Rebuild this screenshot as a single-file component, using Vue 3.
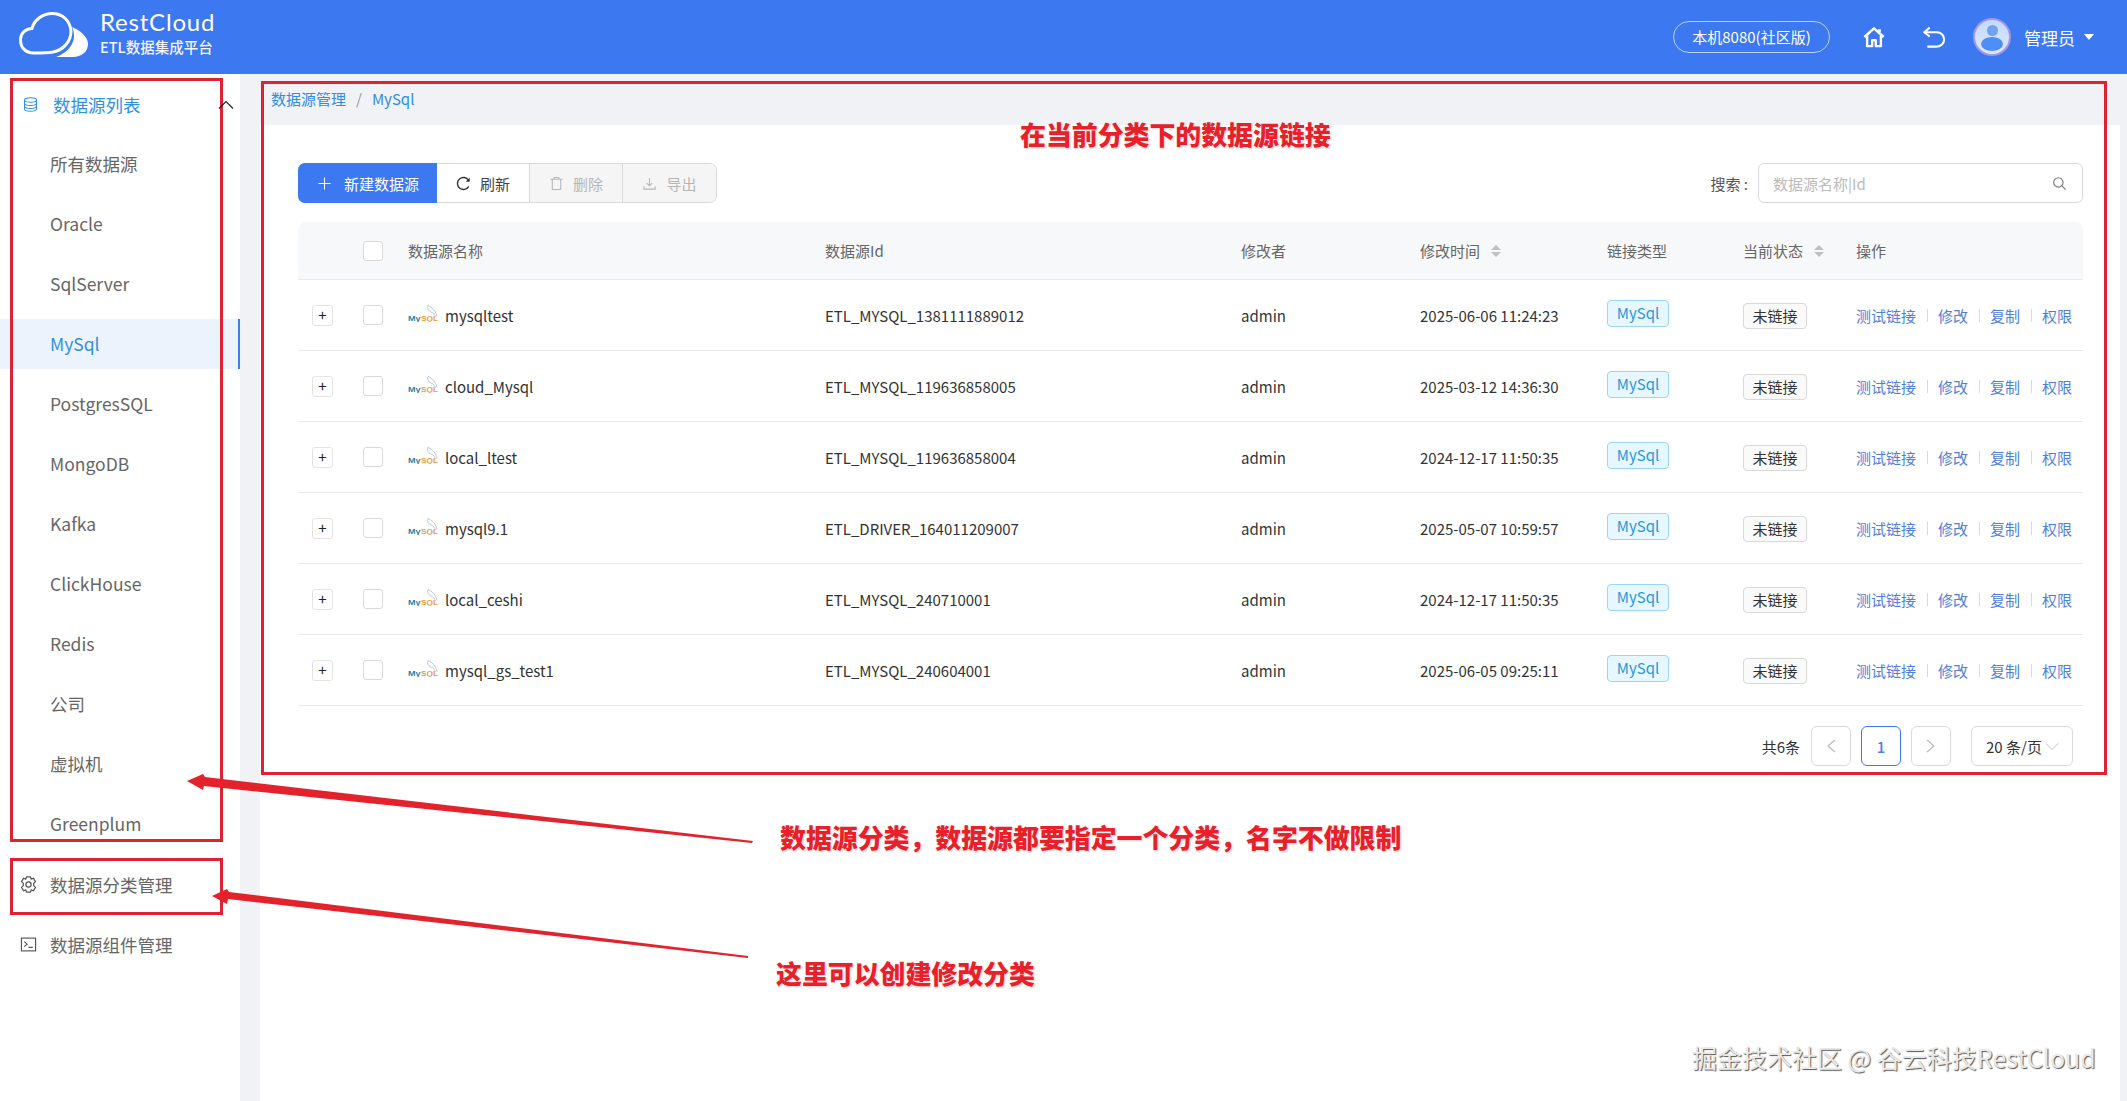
<script setup>
const menu = ['所有数据源','Oracle','SqlServer','MySql','PostgresSQL','MongoDB','Kafka','ClickHouse','Redis','公司','虚拟机','Greenplum']
const rows = [
  ['mysqltest','ETL_MYSQL_1381111889012','2025-06-06 11:24:23'],
  ['cloud_Mysql','ETL_MYSQL_119636858005','2025-03-12 14:36:30'],
  ['local_ltest','ETL_MYSQL_119636858004','2024-12-17 11:50:35'],
  ['mysql9.1','ETL_DRIVER_164011209007','2025-05-07 10:59:57'],
  ['local_ceshi','ETL_MYSQL_240710001','2024-12-17 11:50:35'],
  ['mysql_gs_test1','ETL_MYSQL_240604001','2025-06-05 09:25:11'],
]
</script>

<template>
  <div class="page">
    <header class="topbar">
      <div class="brand">
        <svg class="cloud" viewBox="0 0 70 46" fill="none">
          <path d="M53 15C60 18 69 24 69 32C69 40 62 45 54 45L37 45C46 42 55 34 55 24C55 20 54 17 53 15Z" fill="#fff"/>
          <path d="M15 41C6 41 1.5 35 1.5 28C1.5 21 7 16.5 13 16.5C15 8 24 1.5 33 1.5C44 1.5 51 9 52 19C52 30 44 38 34 40C28 41 20 41 15 41Z" stroke="#fff" stroke-width="3"/>
        </svg>
        <div class="brand-text">
          <div class="brand-name">RestCloud</div>
          <div class="brand-sub">ETL数据集成平台</div>
        </div>
      </div>
      <div class="top-right">
        <div class="env">本机8080(社区版)</div>
        <svg class="home" viewBox="0 0 24 24" fill="none" stroke="#fff" stroke-width="2.6" stroke-linejoin="round">
          <path d="M1.5 12L12 2.5L22.5 12"/>
          <path d="M4.5 10.5V22H10V15.5H14V22H19.5V10.5"/>
          <path d="M18 3.5V7" stroke-width="3"/>
        </svg>
        <svg class="back" viewBox="0 0 24 24" fill="none" stroke="#fff" stroke-width="2.2">
          <path d="M2 6.5H15A7.5 7.5 0 0 1 15 21.5H5"/>
          <path d="M7.5 1.5L2 6.5L7.5 11"/>
        </svg>
        <div class="avatar"><i class="head"></i><i class="torso"></i></div>
        <span class="user">管理员</span>
        <i class="caret"></i>
      </div>
    </header>

    <div class="body">
      <aside class="side">
        <div class="side-head">
          <svg class="db" viewBox="0 0 16 16" fill="none" stroke="currentColor" stroke-width="1.1">
            <ellipse cx="8" cy="3.2" rx="6.4" ry="2.4"/>
            <path d="M1.6 3.2V12.8C1.6 14.1 4.5 15.2 8 15.2S14.4 14.1 14.4 12.8V3.2"/>
            <path d="M1.6 6.6C1.6 7.9 4.5 9 8 9S14.4 7.9 14.4 6.6"/>
            <path d="M1.6 9.8C1.6 11.1 4.5 12.2 8 12.2S14.4 11.1 14.4 9.8"/>
          </svg>
          <span>数据源列表</span>
          <svg class="chev" viewBox="0 0 16 10" fill="none" stroke="#222" stroke-width="1.2"><path d="M1 8.5L8 1.5L15 8.5"/></svg>
        </div>
        <div v-for="m in menu" :key="m" class="side-item" :class="{ on: m === 'MySql' }">{{ m }}</div>
        <div class="side-tool">
          <svg viewBox="2 1.5 20 21" fill="none" stroke="#555" stroke-width="1.5" stroke-linejoin="round">
            <path d="M9.5 2.5H14.5L15.3 5.4L18 4.2L20.6 8.5L18.4 10.6V13.4L20.6 15.5L18 19.8L15.3 18.6L14.5 21.5H9.5L8.7 18.6L6 19.8L3.4 15.5L5.6 13.4V10.6L3.4 8.5L6 4.2L8.7 5.4Z"/>
            <circle cx="12" cy="12" r="3.2"/>
          </svg>
          <span>数据源分类管理</span>
        </div>
        <div class="side-tool">
          <svg viewBox="0 0 24 24" fill="none" stroke="#555" stroke-width="1.6">
            <rect x="2" y="3" width="20" height="18"/>
            <path d="M6 8L10 11.5L6 15M12 16H18"/>
          </svg>
          <span>数据源组件管理</span>
        </div>
      </aside>

      <main class="main">
        <div class="crumb"><span>数据源管理</span><em>/</em><span>MySql</span></div>
        <section class="card">
          <div class="toolbar">
            <div class="btns">
              <div class="btn primary">
                <svg viewBox="0 0 16 16" stroke="#fff" stroke-width="1.1"><path d="M8 1.5V14.5M1.5 8H14.5"/></svg>新建数据源
              </div>
              <div class="btn">
                <svg viewBox="0 0 16 16" fill="none" stroke="#333" stroke-width="1.5"><path d="M13.4 4.6A6.4 6.4 0 1 0 13.6 11"/><path d="M14.6 1.6V6H10.4Z" fill="#333" stroke="none"/></svg>刷新
              </div>
              <div class="btn off">
                <svg viewBox="0 0 16 16" fill="none" stroke="#b5b5b5" stroke-width="1.1"><path d="M1.5 3.5H14.5M5.5 3.5V1.5H10.5V3.5M3.5 3.5V14.5H12.5V3.5"/></svg>删除
              </div>
              <div class="btn off">
                <svg viewBox="0 0 16 16" fill="none" stroke="#b5b5b5" stroke-width="1.1"><path d="M8 2V10.5M5 7.5L8 10.5L11 7.5M2 11V14H14V11"/></svg>导出
              </div>
            </div>
            <div class="search">
              <label>搜索 :</label>
              <div class="input">
                <span>数据源名称|Id</span>
                <svg viewBox="0 0 16 16" fill="none" stroke="#777" stroke-width="1.2"><circle cx="6.8" cy="6.8" r="5"/><path d="M10.5 10.5L14.5 14.5"/></svg>
              </div>
            </div>
          </div>

          <div class="table">
            <div class="tr th">
              <div></div>
              <div><i class="check"></i></div>
              <div>数据源名称</div>
              <div>数据源Id</div>
              <div>修改者</div>
              <div class="sortable">修改时间<span class="sort"><i class="up"></i><i class="down"></i></span></div>
              <div>链接类型</div>
              <div class="sortable">当前状态<span class="sort"><i class="up"></i><i class="down"></i></span></div>
              <div>操作</div>
            </div>
            <div v-for="r in rows" :key="r[0]" class="tr">
              <div class="exp-cell"><i class="expand">+</i></div>
              <div><i class="check"></i></div>
              <div class="name">
                <svg class="mysql" viewBox="0 0 31 17" fill="none">
                  <path d="M20 .5C24 2 28 6 29 11.5M20 .5C19 3 20 5.5 23 7C25.500 8 27 10 27.500 12" stroke="#8fa3b5" stroke-width=".6"/>
                  <text x="0" y="16" textLength="12.500" lengthAdjust="spacingAndGlyphs" font-family="Liberation Sans, sans-serif" font-size="7.500" font-weight="700" fill="#2f7fa0">My</text>
                  <text x="13" y="16" textLength="17" lengthAdjust="spacingAndGlyphs" font-family="Liberation Sans, sans-serif" font-size="7.500" font-weight="700" fill="#e8a040">SQL</text>
                </svg>
                {{ r[0] }}
              </div>
              <div>{{ r[1] }}</div>
              <div>admin</div>
              <div>{{ r[2] }}</div>
              <div><span class="tag">MySql</span></div>
              <div><span class="state">未链接</span></div>
              <div class="ops"><a>测试链接</a><b></b><a>修改</a><b></b><a>复制</a><b></b><a>权限</a></div>
            </div>
          </div>

          <div class="pager">
            <span class="total">共6条</span>
            <div class="pg"><svg viewBox="0 0 12 16" fill="none" stroke="#bbb" stroke-width="1.2"><path d="M10 2L3 8L10 14"/></svg></div>
            <div class="pg cur">1</div>
            <div class="pg"><svg viewBox="0 0 12 16" fill="none" stroke="#bbb" stroke-width="1.2"><path d="M2 2L9 8L2 14"/></svg></div>
            <div class="size">20 条/页<svg viewBox="0 0 16 10" fill="none" stroke="#bbb" stroke-width="1.1"><path d="M1 1.5L8 8.500L15 1.5"/></svg></div>
          </div>
        </section>
      </main>
    </div>

    <i class="box box-a"></i>
    <i class="box box-b"></i>
    <i class="box box-c"></i>
    <svg class="arrows" viewBox="0 0 2127 1101">
      <polygon points="187,781 203,774 205,777 753,841 752,843 204,786 203,790" fill="#e3222c"/>
      <polygon points="212,896 227,889 229,892 748,956 748,958 228,899 227,904" fill="#e3222c"/>
    </svg>
    <div class="note note-a">在当前分类下的数据源链接</div>
    <div class="note note-b">数据源分类，数据源都要指定一个分类，名字不做限制</div>
    <div class="note note-c">这里可以创建修改分类</div>
    <div class="mark">掘金技术社区 @ 谷云科技RestCloud</div>
  </div>
</template>

<style>
html, body { margin: 0; background: #fff; }
</style>

<style scoped>
* { box-sizing: border-box; }
.page {
  position: relative;
  height: 1101px;
  overflow: hidden;
  display: flex;
  flex-direction: column;
  font-family: "Noto Sans CJK SC", "Noto Sans", sans-serif;
  color: #333;
}
.topbar {
  height: 74px;
  flex: none;
  background: #3c78f0;
  display: flex;
  align-items: center;
  justify-content: space-between;
  padding: 0 33px 0 19px;
  color: #fff;
}
.brand { display: flex; align-items: center; gap: 11px; }
.cloud { width: 70px; height: 46px; margin-bottom: 5px; }
.brand-text { width: 114px; margin-bottom: 10px; }
.brand-name { font-family: "Lato", sans-serif; font-size: 24px; line-height: 26px; letter-spacing: .8px; font-weight: 400; }
.brand-sub { font-size: 14.5px; line-height: 17px; margin-top: 3px; font-weight: 500; white-space: nowrap; opacity: .92; }
.top-right { display: flex; align-items: center; }
.env {
  width: 157px; height: 32px; border: 1px solid rgba(255,255,255,.65); border-radius: 16px;
  font-size: 15px; line-height: 29px; text-align: center; margin-right: -2px; transform: translateX(-1px);
}
.home { width: 22px; height: 22px; margin-left: 33px; transform: translateX(1px); }
.back { width: 24px; height: 23px; margin-left: 38px; }
.avatar {
  position: relative; width: 38px; height: 38px; margin-left: 26px; border-radius: 50%;
  background: linear-gradient(#c3d9fb, #dce9fd); border: 2px solid #a695e6; overflow: hidden; transform: translateX(1px);
}
.head { position: absolute; left: 12px; top: 5px; width: 11px; height: 11px; border-radius: 50%; background: #6fa2f2; }
.torso { position: absolute; left: 6px; top: 17px; width: 22px; height: 14px; border-radius: 50%; background: #4f8ef5; }
.user { font-size: 17px; margin-left: 14px; }
.caret { width: 0; height: 0; margin-left: 9px; border: 5px solid transparent; border-top: 6px solid #fff; border-bottom: 0; }

.body { flex: 1; display: flex; min-height: 0; }
.side { width: 240px; flex: none; background: #fff; font-size: 17.5px; color: #666; display: flex; flex-direction: column; }
.side-head {
  height: 60px; flex: none; display: flex; align-items: center; padding-left: 23px; color: #3090e0; position: relative;
}
.db { width: 15px; height: 15px; margin-right: 15px; }
.chev { position: absolute; left: 218px; top: 26px; width: 16px; height: 10px; z-index: 1; }
.side-item {
  height: 50px; flex: none; margin: 5px 0; padding-left: 50px; line-height: 50px;
}
.side-item.on { background: #edf3fd; border-right: 2px solid #2f86e6; color: #3090e0; }
.side-tool { height: 60px; flex: none; display: flex; align-items: center; padding-left: 20px; }
.side-tool svg { width: 17px; height: 17px; margin-right: 13px; }

.main { flex: 1; min-width: 0; display: flex; flex-direction: column; background: linear-gradient(#f0f2f5, #f0f2f5) left / 20px 100% no-repeat, linear-gradient(#f0f2f5, #f0f2f5) right / 7px 100% no-repeat, #fff; padding: 0 7px 0 20px; }
.crumb { height: 51px; flex: none; background: #f0f2f5; padding: 14px 0 0 11px; font-size: 15px; line-height: 22px; color: #2f8ee0; white-space: nowrap; }
.crumb em { font-style: normal; color: #999; margin: 0 10px; }
.card { background: #fff; border-radius: 8px 8px 0 0; padding: 38px 37px 0 38px; flex: none; }
.toolbar { display: flex; justify-content: space-between; height: 40px; }
.btns { display: flex; border: 1px solid #d9d9d9; border-radius: 7px; }
.btn {
  width: 93px; display: flex; align-items: center; justify-content: center; gap: 9px;
  font-size: 15px; color: #444; border-right: 1px solid #d9d9d9; background: #fff;
}
.btn:last-child { border-right: 0; border-radius: 0 6px 6px 0; }
.btn svg { width: 15px; height: 15px; }
.btn.primary { width: 139px; margin: -1px 0 -1px -1px; background: #3c78f0; color: #fff; border: 0; border-radius: 7px 0 0 7px; gap: 12px; padding-left: 1px; }
.btn.off { background: #f5f5f5; color: #b5b5b5; }
.search { display: flex; align-items: center; }
.search label { font-size: 15px; color: #555; margin-right: 10px; }
.input {
  width: 325px; height: 40px; border: 1px solid #d9d9d9; border-radius: 6px; display: flex; align-items: center; justify-content: space-between;
  padding: 0 15px 0 14px; font-size: 15px; color: #bbb;
}
.input svg { width: 15px; height: 15px; }

.table { margin-top: 19px; }
.tr {
  display: grid;
  grid-template-columns: 65px 45px 417px 416px 179px 187px 136px 113px 227px;
  align-items: center; height: 71px; border-bottom: 1px solid #e9eaec; font-size: 15px; color: #333;
}
.th { height: 58px; background: #f7f8fa; border-radius: 8px 8px 0 0; color: #666; }
.exp-cell { padding-left: 14px; }
.expand {
  display: block; width: 21px; height: 21px; border: 1px solid #e3e3e3; border-radius: 3px; font-style: normal; text-align: center;
  line-height: 17px; font-size: 15px; background: #fff; color: #222;
}
.check { display: block; width: 20px; height: 20px; border: 1px solid #d9d9d9; border-radius: 3px; background: #fff; }
.name { display: flex; align-items: center; gap: 6px; }
.mysql { width: 31px; height: 17px; margin-top: -3px; }
.sortable { display: flex; align-items: center; }
.sort { display: flex; flex-direction: column; gap: 2px; margin-left: 11px; }
.up { width: 0; height: 0; border: 5.5px solid transparent; border-bottom: 5.5px solid #c0c0c0; border-top: 0; }
.down { width: 0; height: 0; border: 5.5px solid transparent; border-top: 5.5px solid #c0c0c0; border-bottom: 0; }
.tag {
  display: block; width: 62px; height: 27px; margin-top: -4px; line-height: 24px; text-align: center; border: 1px solid #9ad7f5; border-radius: 4px; background: #e6f7ff; color: #2c98d8;
}
.state {
  display: block; width: 64px; height: 26px; margin-top: 2px; line-height: 23px; text-align: center; border: 1px solid #d9d9d9; border-radius: 4px; background: #fafafa; color: #333;
}
.ops { display: flex; align-items: center; color: #4f80d8; }
.ops b { width: 1px; height: 13px; background: #d9d9d9; margin: 0 10.5px; }
.pager { display: flex; align-items: center; justify-content: flex-end; margin-top: 20px; padding-right: 10px; height: 40px; font-size: 15px; }
.total { margin-right: 11px; }
.pg { width: 40px; height: 40px; border: 1px solid #d9d9d9; border-radius: 6px; display: flex; align-items: center; justify-content: center; margin-right: 10px; }
.pg svg { width: 12px; height: 16px; }
.pg.cur { border-color: #3c78f0; color: #4f80d8; font-weight: 500; }
.size { width: 102px; height: 40px; margin-left: 10px; border: 1px solid #d9d9d9; border-radius: 6px; display: flex; align-items: center; padding-left: 14px; white-space: nowrap; gap: 3px; }
.size svg { width: 14px; height: 9px; }

.box { position: absolute; border: 3px solid #dc2430; pointer-events: none; }
.box-a { left: 10px; top: 78px; width: 213px; height: 764px; }
.box-b { left: 10px; top: 858px; width: 213px; height: 57px; }
.box-c { left: 261px; top: 81px; width: 1846px; height: 694px; }
.arrows { position: absolute; left: 0; top: 0; width: 2127px; height: 1101px; pointer-events: none; }
.note {
  position: absolute; font-size: 25.9px; line-height: 34px; font-weight: 900; color: #e8202a; white-space: nowrap;
  text-shadow: 0 0 3px #fff, 1px 1px 2px rgba(180,60,60,.35);
}
.note-a { left: 1020px; top: 117px; }
.note-b { left: 780px; top: 820px; }
.note-c { left: 776px; top: 956px; }
.mark {
  position: absolute; left: 1692px; top: 1040px; font-size: 25px; line-height: 34px; color: #e9e9e9; white-space: nowrap;
  text-shadow: 1px 1px 1px #555;
}
</style>
